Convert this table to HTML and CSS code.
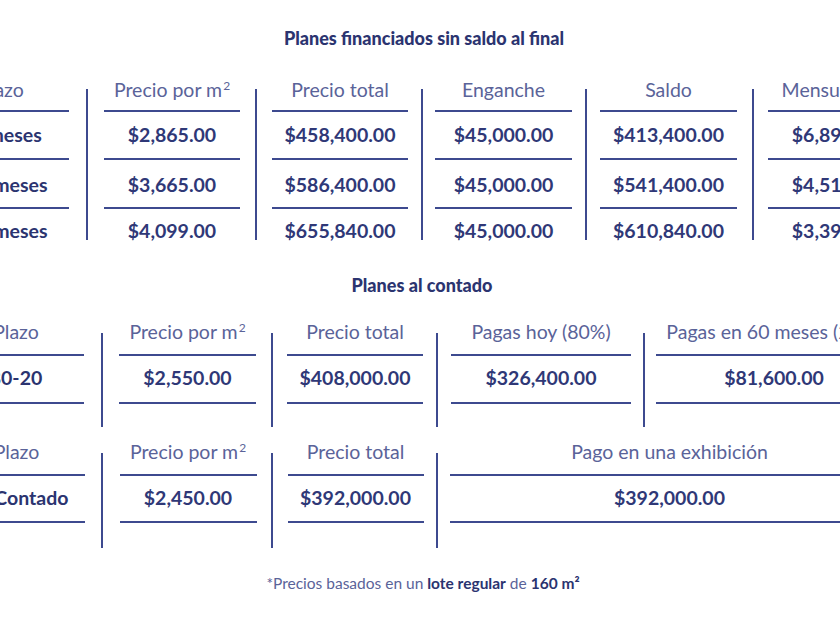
FILE: index.html
```html
<!DOCTYPE html>
<html lang="es">
<head>
<meta charset="utf-8">
<title>Planes</title>
<link rel="stylesheet" href="styles.css">
</head>
<body>
<main class="page">
  <h2 class="title title-fin">Planes financiados sin saldo al final</h2>
  <div class="wrap">
    <div class="grid grid-fin">
      <div class="col">
        <div class="head">Plazo</div>
        <div class="cell strong">60 meses</div>
        <div class="cell mid strong">120 meses</div>
        <div class="cell strong last">180 meses</div>
      </div>
      <div class="divider div-fin"></div>
      <div class="col">
        <div class="head">Precio por m<span class="sq">2</span></div>
        <div class="cell">$2,865.00</div>
        <div class="cell mid">$3,665.00</div>
        <div class="cell last">$4,099.00</div>
      </div>
      <div class="divider div-fin"></div>
      <div class="col">
        <div class="head">Precio total</div>
        <div class="cell">$458,400.00</div>
        <div class="cell mid">$586,400.00</div>
        <div class="cell last">$655,840.00</div>
      </div>
      <div class="divider div-fin"></div>
      <div class="col">
        <div class="head">Enganche</div>
        <div class="cell">$45,000.00</div>
        <div class="cell mid">$45,000.00</div>
        <div class="cell last">$45,000.00</div>
      </div>
      <div class="divider div-fin"></div>
      <div class="col">
        <div class="head">Saldo</div>
        <div class="cell">$413,400.00</div>
        <div class="cell mid">$541,400.00</div>
        <div class="cell last">$610,840.00</div>
      </div>
      <div class="divider div-fin"></div>
      <div class="col">
        <div class="head">Mensualidad</div>
        <div class="cell">$6,890.00</div>
        <div class="cell mid">$4,511.67</div>
        <div class="cell last">$3,393.56</div>
      </div>
    </div>
  </div>

  <h2 class="title title-cont">Planes al contado</h2>
  <div class="wrap">
    <div class="grid grid-8020">
      <div class="col">
        <div class="head head-c">Plazo</div>
        <div class="cell cell-c strong">80-20</div>
      </div>
      <div class="divider div-c"></div>
      <div class="col">
        <div class="head head-c">Precio por m<span class="sq">2</span></div>
        <div class="cell cell-c">$2,550.00</div>
      </div>
      <div class="divider div-c"></div>
      <div class="col">
        <div class="head head-c">Precio total</div>
        <div class="cell cell-c">$408,000.00</div>
      </div>
      <div class="divider div-c"></div>
      <div class="col">
        <div class="head head-c">Pagas hoy (80%)</div>
        <div class="cell cell-c">$326,400.00</div>
      </div>
      <div class="divider div-c"></div>
      <div class="col">
        <div class="head head-c">Pagas en 60 meses (20%)</div>
        <div class="cell cell-c">$81,600.00</div>
      </div>
    </div>
  </div>

  <div class="wrap wrap-last">
    <div class="grid grid-contado">
      <div class="col">
        <div class="head head-c">Plazo</div>
        <div class="cell cell-c2 strong">De Contado</div>
      </div>
      <div class="divider div-c2"></div>
      <div class="col">
        <div class="head head-c">Precio por m<span class="sq">2</span></div>
        <div class="cell cell-c2">$2,450.00</div>
      </div>
      <div class="divider div-c2"></div>
      <div class="col">
        <div class="head head-c">Precio total</div>
        <div class="cell cell-c2">$392,000.00</div>
      </div>
      <div class="divider div-c2"></div>
      <div class="col">
        <div class="head head-c">Pago en una exhibición</div>
        <div class="cell cell-c2">$392,000.00</div>
      </div>
    </div>
  </div>

  <p class="note">*Precios basados en un <b>lote regular</b> de <b>160 m²</b></p>
</main>
</body>
</html>
```

FILE: styles.css
```css
* { box-sizing: border-box; }

html, body {
  margin: 0;
  padding: 0;
  background: #ffffff;
}

body {
  width: 840px;
  height: 630px;
  overflow: hidden;
  font-family: Lato, "Noto Sans", "Liberation Sans", sans-serif;
  color: #2f3877;
}

.page {
  padding-top: 28px;
  display: flex;
  flex-direction: column;
  align-items: center;
}

.title {
  margin: 0;
  font-size: 18px;
  line-height: 20px;
  font-weight: 900;
  color: #2b3470;
  white-space: nowrap;
}

.title-fin { margin-left: 8px; }
.title-cont { margin-top: 18px; margin-left: 4px; }

.wrap {
  width: 840px;
  display: flex;
  justify-content: center;
}

.grid {
  display: grid;
  flex: none;
  align-items: start;
}

.grid-fin {
  margin-top: 28px;
  margin-right: 3px;
  grid-template-columns: 136px 35px 136px 32px 136px 27px 137px 28px 137px 31px 136px;
}

.grid-8020 {
  margin-top: 24px;
  grid-template-columns: 136px 35px 137px 31px 136px 28px 180px 25px 236px;
}

.grid-contado {
  margin-top: 12px;
  margin-left: -2px;
  grid-template-columns: 136px 35px 137px 31px 136px 26px 440px;
}

.col {
  display: flex;
  flex-direction: column;
}

.head {
  height: 36px;
  line-height: 28px;
  font-size: 19.5px;
  font-weight: 400;
  color: #5a6399;
  text-align: center;
  white-space: nowrap;
  border-bottom: 2px solid #3d4a8f;
}

.head-c {
  height: 37px;
  line-height: 26px;
}

.sq {
  font-size: 12px;
  vertical-align: 0.55em;
  line-height: 0;
  margin-left: 1px;
}

.cell {
  height: 48px;
  line-height: 46px;
  font-size: 19.5px;
  font-weight: 700;
  color: #2f3877;
  text-align: center;
  white-space: nowrap;
  border-bottom: 2px solid #3d4a8f;
}

.cell.mid {
  height: 49px;
  line-height: 50px;
}

.cell.last {
  border-bottom: 0;
  line-height: 44px;
}

.cell-c {
  height: 48px;
  line-height: 43px;
}

.cell-c2 {
  height: 47px;
  line-height: 44px;
}

.strong { color: #2b3470; }

.divider {
  width: 2px;
  justify-self: center;
  background: #3d4a8f;
}

.div-fin {
  margin-top: 13px;
  height: 151px;
}

.div-c {
  margin-top: 14px;
  height: 94px;
}

.div-c2 {
  margin-top: 14px;
  height: 95px;
}

.note {
  margin: 27px 0 0 6px;
  font-size: 15.5px;
  line-height: 16px;
  color: #5a6399;
  white-space: nowrap;
}

.note b {
  font-weight: 700;
  color: #2b3470;
}
```
